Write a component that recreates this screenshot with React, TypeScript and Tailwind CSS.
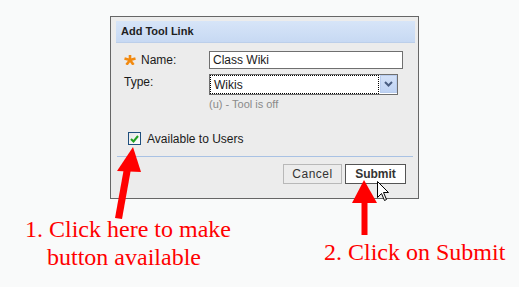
export default function App() {
  return (
    <div className="relative w-[519px] h-[287px] overflow-hidden bg-[#f9fafa] flex flex-col pt-[16px]">
      <div className="ml-[110px] w-[309px] h-[183px] shrink-0 border border-[#666666] bg-[#ececec] pt-[4px] pl-[5px] pr-[3px] flex flex-col font-['Liberation_Sans',Arial,sans-serif] text-[12px] text-[#1a1a1a]">
        <div className="h-[22px] flex items-center pl-[5px] bg-gradient-to-b from-[#d7e5f8] to-[#c7d9f3] border-b border-[#bccfea]">
          <span className="font-bold text-[11px] text-[#1e1e1e]">Add Tool Link</span>
        </div>
        <div className="pl-[8px] flex flex-col">
          <div className="mt-[8px] h-[18px] flex items-center">
            <div className="w-[85px] flex items-center gap-[5px]">
              <svg width="12" height="10" viewBox="0 0 12 10">
                <g stroke="#f28a10" strokeWidth="2.6" strokeLinecap="butt">
                  <line x1="6" y1="5" x2="6" y2="0" />
                  <line x1="6" y1="5" x2="0.5" y2="3.5" />
                  <line x1="6" y1="5" x2="11.5" y2="3.5" />
                  <line x1="6" y1="5" x2="2.5" y2="9.8" />
                  <line x1="6" y1="5" x2="9.5" y2="9.8" />
                </g>
              </svg>
              <span>Name:</span>
            </div>
            <div className="w-[194px] h-[18px] border border-[#6f6f6f] bg-white flex items-center pl-[3px]">
              <span>Class Wiki</span>
            </div>
          </div>
          <div className="mt-[5px] flex items-start">
            <div className="w-[85px] pt-[1px] leading-[14px]">Type:</div>
            <div className="w-[189px] h-[21px] border border-[#6f6f6f] bg-white flex items-start gap-[1px]">
              <div className="flex-1 h-[19px] border border-dotted border-black flex items-center pl-[3px]">
                <span>Wikis</span>
              </div>
              <div className="w-[17px] h-[18px] bg-gradient-to-b from-[#d3e1f8] to-[#bfd3f4] border border-[#b9cdee] flex items-center justify-center">
                <svg width="9" height="6" viewBox="0 0 9 6">
                  <path d="M1 1 L4.5 4.5 L8 1" fill="none" stroke="#4a5e82" strokeWidth="2" />
                </svg>
              </div>
            </div>
          </div>
          <div className="mt-[2px] pl-[85px] text-[11px] leading-[14px] text-[#8a8a8a]">(u) - Tool is off</div>
          <div className="mt-[21px] ml-[4px] h-[13px] flex items-center gap-[6px]">
            <div className="w-[13px] h-[13px] border border-[#1f4f7e] bg-gradient-to-br from-[#e6e6e6] to-white flex items-center justify-center">
              <svg width="9" height="8" viewBox="0 0 9 8">
                <path d="M1 4 L3.5 6.5 L8 1" fill="none" stroke="#21a121" strokeWidth="2" />
              </svg>
            </div>
            <span>Available to Users</span>
          </div>
        </div>
        <div className="mt-[11px] ml-[1px] mr-[2px] h-px bg-[#a9c2e4]" />
        <div className="mt-[7px] flex justify-end gap-[3px] pr-[9px]">
          <div className="w-[59px] h-[20px] border border-[#b8b8b8] bg-[#ececec] flex items-center justify-center text-[#333] tracking-[0.5px]">Cancel</div>
          <div className="w-[61px] h-[20px] border border-[#555555] bg-white flex items-center justify-center font-bold text-[#333] text-[12px]">Submit</div>
        </div>
      </div>
      <div className="mt-[16px] flex items-start font-['Liberation_Serif','Times_New_Roman',serif] text-[24px] leading-[28px] text-[#ff0000]">
        <div className="w-[299px] pl-[25px] shrink-0">
          <div>1. Click here to make</div>
          <div className="pl-[22px]">button available</div>
        </div>
        <div className="ml-[25px] mt-[23px] whitespace-nowrap">2. Click on Submit</div>
      </div>
      <svg className="absolute left-0 top-0 pointer-events-none" width="519" height="287" viewBox="0 0 519 287">
        <polygon points="133,147 117,171 141,172" fill="#ff0000" />
        <polygon points="124,168 131,169 122,219 115,218" fill="#ff0000" />
        <polygon points="364,180 352,203 377,203" fill="#ff0000" />
        <rect x="361.5" y="200" width="6" height="35" fill="#ff0000" />
        <polygon points="377.5,181.5 377.5,197.5 381.5,193.5 384.5,200.5 386.5,199.5 383.5,192.5 388.5,192.5" fill="#ffffff" stroke="#000000" strokeWidth="1" strokeLinejoin="miter" />
      </svg>
    </div>
  );
}
